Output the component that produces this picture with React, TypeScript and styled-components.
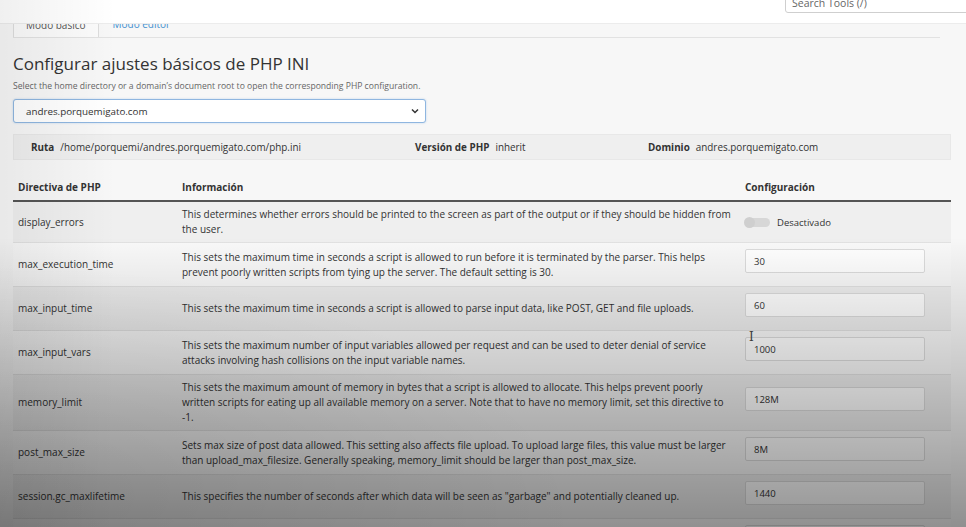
import React from 'react';
import styled, { createGlobalStyle } from 'styled-components';

const GlobalStyle = createGlobalStyle`
  html, body {
    margin: 0;
    padding: 0;
    background: #f7f7f7;
    font-family: "Open Sans", "Liberation Sans", sans-serif;
    color: #333;
    overflow: hidden;
  }
  * { box-sizing: border-box; }
`;

const Page = styled.div`
  width: 966px;
  height: 527px;
  position: relative;
  overflow: hidden;
  background: #f7f7f7;
`;

const TopBar = styled.header`
  height: 24px;
  background: #fff;
  display: flex;
  justify-content: flex-end;
  border-bottom: 1px solid #ececec;
`;

const SearchBox = styled.div`
  width: 200px;
  height: 21px;
  margin-top: -8px;
  margin-right: -19px;
  border: 1px solid #cfcfcf;
  border-radius: 3px;
  background: #fff;
  padding: 0 6px;
  display: flex;
  align-items: center;
  font-size: 10.5px;
  color: #666;
`;

const Main = styled.main`
  padding: 0 15px 0 13px;
`;

const TabStrip = styled.nav`
  height: 14px;
  display: flex;
  align-items: flex-end;
  overflow: hidden;
  margin-right: 11px;
  border-bottom: 1px solid #e2e2e2;
`;

const Tab = styled.div<{ $active?: boolean }>`
  padding: 0 12px 7px;
  margin-right: 1px;
  font-size: 10px;
  line-height: 12px;
  background: ${(p) => (p.$active ? '#fbfbfb' : 'transparent')};
  color: ${(p) => (p.$active ? '#555' : '#3f8fcf')};
  border: 1px solid ${(p) => (p.$active ? '#dddddd' : 'transparent')};
  border-bottom: none;
  margin-bottom: ${(p) => (p.$active ? '-1px' : '0')};
`;

const Title = styled.h1`
  margin: 14px 0 0;
  font-size: 17px;
  line-height: 24px;
  font-weight: 400;
  color: #333;
`;

const Hint = styled.p`
  margin: 3px 0 0;
  font-size: 8.6px;
  line-height: 14px;
  color: #666;
`;

const Select = styled.div`
  margin-top: 6px;
  width: 413px;
  height: 24px;
  background: #fff;
  border: 1px solid #8fb6e0;
  border-radius: 3px;
  box-shadow: 0 0 2px rgba(102, 160, 220, 0.45);
  display: flex;
  align-items: center;
  justify-content: space-between;
  padding: 0 6px 0 12px;
  font-size: 9.8px;
  color: #333;
`;

const InfoBar = styled.div`
  margin-top: 11px;
  height: 26px;
  background: #efefef;
  border: 1px solid #e8e8e8;
  display: grid;
  grid-template-columns: 384px 233px 1fr;
  align-items: center;
  padding-left: 17px;
  font-size: 9.9px;
`;

const InfoItem = styled.div`
  display: flex;
  gap: 6px;
  strong { font-weight: 700; }
`;

const Table = styled.div`
  margin-top: 15px;
  width: 938px;
`;

const Row = styled.div<{ $head?: boolean; $shade?: boolean }>`
  display: grid;
  grid-template-columns: 164px 563px 1fr;
  align-items: center;
  min-height: ${(p) => (p.$head ? '25px' : '0')};
  background: ${(p) => (p.$head ? 'transparent' : p.$shade ? '#efefef' : '#f9f9f9')};
  border-bottom: ${(p) => (p.$head ? '2px solid #555' : '1px solid #e2e2e2')};
  font-size: 10px;
  line-height: 15px;
  font-weight: ${(p) => (p.$head ? 700 : 400)};
`;

const Cell = styled.div<{ $field?: boolean }>`
  padding: ${(p) => (p.$field ? '6px 6px 13px 5px' : '5px 6px 5px 5px')};
`;

const Field = styled.div`
  width: 180px;
  height: 24px;
  background: #fff;
  border: 1px solid #dcdcdc;
  border-radius: 2px;
  display: flex;
  align-items: center;
  padding-left: 8px;
  font-size: 9.5px;
`;

const ToggleWrap = styled.div`
  display: flex;
  align-items: center;
  gap: 7px;
  padding-top: 1px;
  font-size: 9.5px;
`;

const Switch = styled.span`
  width: 25px;
  height: 9px;
  border-radius: 5px;
  background: #d7d7d7;
  position: relative;
  &::before {
    content: '';
    position: absolute;
    left: -1px;
    top: -1px;
    width: 11px;
    height: 11px;
    border-radius: 50%;
    background: #cfcfcf;
  }
`;

const Cursor = styled.span`
  position: absolute;
  left: 749px;
  top: 330px;
  font-size: 12px;
  color: #444;
  font-family: "DejaVu Serif", serif;
`;

const Shade = styled.div`
  position: absolute;
  inset: 0;
  pointer-events: none;
  background:
    radial-gradient(ellipse 60% 50% at 0% 100%, rgba(0, 0, 0, 0.12), rgba(0, 0, 0, 0) 100%),
    linear-gradient(to right, rgba(0, 0, 0, 0.06) 0%, rgba(0, 0, 0, 0) 12%),
    linear-gradient(to bottom, rgba(0, 0, 0, 0) 45%, rgba(0, 0, 0, 0.18) 70%, rgba(0, 0, 0, 0.42) 100%);
`;

const Chevron = () => (
  <svg width="8" height="6" viewBox="0 0 8 6">
    <path d="M1 1.5 L4 4.5 L7 1.5" fill="none" stroke="#333" strokeWidth="1.5" />
  </svg>
);

type Directive = { name: string; info: string; value?: string };

const rows: Directive[] = [
  {
    name: 'display_errors',
    info: 'This determines whether errors should be printed to the screen as part of the output or if they should be hidden from the user.',
  },
  {
    name: 'max_execution_time',
    info: 'This sets the maximum time in seconds a script is allowed to run before it is terminated by the parser. This helps prevent poorly written scripts from tying up the server. The default setting is 30.',
    value: '30',
  },
  {
    name: 'max_input_time',
    info: 'This sets the maximum time in seconds a script is allowed to parse input data, like POST, GET and file uploads.',
    value: '60',
  },
  {
    name: 'max_input_vars',
    info: 'This sets the maximum number of input variables allowed per request and can be used to deter denial of service attacks involving hash collisions on the input variable names.',
    value: '1000',
  },
  {
    name: 'memory_limit',
    info: 'This sets the maximum amount of memory in bytes that a script is allowed to allocate. This helps prevent poorly written scripts for eating up all available memory on a server. Note that to have no memory limit, set this directive to -1.',
    value: '128M',
  },
  {
    name: 'post_max_size',
    info: 'Sets max size of post data allowed. This setting also affects file upload. To upload large files, this value must be larger than upload_max_filesize. Generally speaking, memory_limit should be larger than post_max_size.',
    value: '8M',
  },
  {
    name: 'session.gc_maxlifetime',
    info: 'This specifies the number of seconds after which data will be seen as "garbage" and potentially cleaned up.',
    value: '1440',
  },
  {
    name: 'session.save_path',
    info: 'This sets the path where session files are stored.',
    value: '/var/cpanel/php/sessions',
  },
];

const App = () => {
  return (
    <Page>
      <GlobalStyle />
      <TopBar>
        <SearchBox>Search Tools (/)</SearchBox>
      </TopBar>
      <Main>
        <TabStrip>
          <Tab $active>Modo básico</Tab>
          <Tab>Modo editor</Tab>
        </TabStrip>

        <Title>Configurar ajustes básicos de PHP INI</Title>
        <Hint>Select the home directory or a domain’s document root to open the corresponding PHP configuration.</Hint>
        <Select>
          <span>andres.porquemigato.com</span>
          <Chevron />
        </Select>

        <InfoBar>
          <InfoItem><strong>Ruta</strong> /home/porquemi/andres.porquemigato.com/php.ini</InfoItem>
          <InfoItem><strong>Versión de PHP</strong> inherit</InfoItem>
          <InfoItem><strong>Dominio</strong> andres.porquemigato.com</InfoItem>
        </InfoBar>

        <Table>
          <Row $head>
            <Cell>Directiva de PHP</Cell>
            <Cell>Información</Cell>
            <Cell>Configuración</Cell>
          </Row>
          {rows.map((r, i) => (
            <Row key={r.name} $shade={i % 2 === 0}>
              <Cell>{r.name}</Cell>
              <Cell>{r.info}</Cell>
              {r.value === undefined ? (
                <Cell>
                  <ToggleWrap>
                    <Switch />
                    Desactivado
                  </ToggleWrap>
                </Cell>
              ) : (
                <Cell $field>
                  <Field>{r.value}</Field>
                </Cell>
              )}
            </Row>
          ))}
        </Table>
      </Main>
      <Cursor>I</Cursor>
      <Shade />
    </Page>
  );
};

export default App;
